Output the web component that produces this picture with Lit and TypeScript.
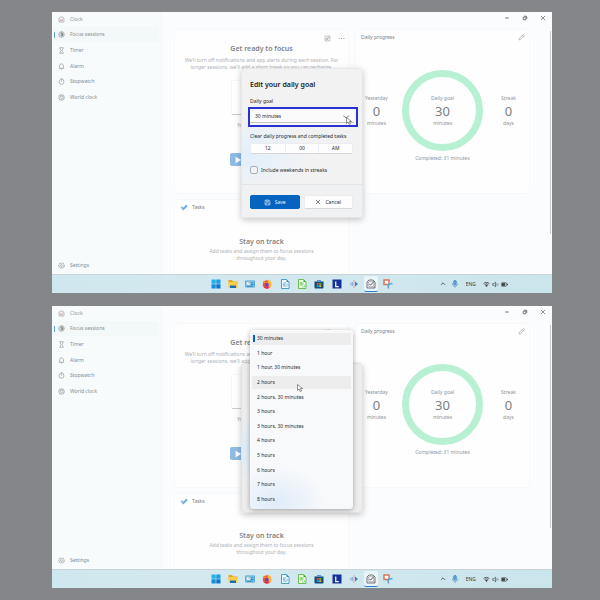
import { LitElement, html, css, svg, nothing, TemplateResult } from "lit";
import { customElement, property } from "lit/decorators.js";

const icon = (body: TemplateResult, cls = "icon") =>
  html`<svg class=${cls} viewBox="0 0 20 20" fill="none" stroke="currentColor" stroke-width="1.7" aria-hidden="true">${body}</svg>`;

const icons = {
  app: svg`<path d="M3 17V6l5-3h6l3 4v10z"/><path d="M6 11l3 3 6-7" /><path d="M10 9a3 3 0 1 0 3 3" stroke="#d79c9c"/>`,
  focus: svg`<circle cx="10" cy="10" r="8"/><circle cx="10" cy="10" r="4.5"/><path d="M10 5.5a4.5 4.5 0 0 1 4.5 4.5 4.5 4.5 0 0 1-4.500 4.500z" fill="currentColor"/><path d="M10 2v4"/>`,
  timer: svg`<path d="M4.500 2h11M4.500 18h11M6 2v3c0 3 3 4 3 5s-3 2-3 5v3M14 2v3c0 3-3 4-3 5s3 2 3 5v3"/>`,
  alarm: svg`<path d="M3 15h14l-1.500-3V8a5.500 5.500 0 0 0-11 0v4zM8 15.500a2 2 0 0 0 4 0"/>`,
  stopwatch: svg`<circle cx="10" cy="11" r="7"/><path d="M10 7v4M7.500 2h5M15.500 4.500l1.500 1.500"/>`,
  world: svg`<circle cx="10" cy="10" r="8"/><path d="M4 5c3 0 5 1 4 4l-4 2M8 17l1-4 4-2 3 4M12 2.500l-1 4 5 2"/>`,
  settings: svg`<path d="M10 2l2 2 3-.5 1 3 2.500 2-1.500 2.500.5 3-3 1-2 2.500-2.500-1.500-2.500 1.500-2-2.500-3-1 .5-3L1.500 8.500 4 6.500l1-3 3 .5z"/><circle cx="10" cy="10" r="2.500"/>`,
  popout: svg`<path d="M8 3H4a1 1 0 0 0-1 1v12a1 1 0 0 0 1 1h12a1 1 0 0 0 1-1v-4M11 3h6v6h-6zM5 15l5-5M6 10h4v4"/>`,
  more: svg`<g fill="currentColor" stroke="none"><circle cx="3" cy="10" r="1.700"/><circle cx="10" cy="10" r="1.700"/><circle cx="17" cy="10" r="1.700"/></g>`,
  edit: svg`<path d="M3 17l1-4.500L14 2.500a1.800 1.800 0 0 1 3.500 3.500L7.500 16zM12 4.500l3.500 3.500"/>`,
  minimise: svg`<path d="M4 10h12" stroke-width="2.500"/>`,
  restore: svg`<rect x="4" y="7" width="9" height="9" rx="2" stroke-width="2.500"/><path d="M7 4h6a3 3 0 0 1 3 3v6" stroke-width="2.500"/>`,
  close: svg`<path d="M3 3l14 14M17 3L3 17" stroke-width="2"/>`,
  play: svg`<path d="M4 2l14 8-14 8z" fill="#fff" stroke="none"/>`,
  save: svg`<path d="M3 5a2 2 0 0 1 2-2h9l3 3v9a2 2 0 0 1-2 2H5a2 2 0 0 1-2-2zM6.500 3v4h6V3M5.500 17v-6h9v6"/>`,
  chevron: svg`<path d="M1 5l8 6 8-6"/>`,
  chevronUp: svg`<path d="M3 13l7-7 7 7" stroke-width="2.500"/>`,
  mic: svg`<rect x="6.500" y="1" width="7" height="11" rx="3.500" fill="#5f9fd8" stroke="#4385c0"/><path d="M3.500 9a6.500 6.500 0 0 0 13 0M10 15.500V19" stroke="#4385c0"/>`,
  wifi: svg`<path d="M1.500 7.500a12 12 0 0 1 17 0M4.500 10.500a8 8 0 0 1 11 0" stroke-width="2.200"/><path d="M6.500 12.500a5 5 0 0 1 7 0L10 17z" fill="currentColor" stroke="none"/>`,
  volume: svg`<path d="M2 7.500h3.500L10 3.500v13l-4.500-4H2z"/><path d="M13 7a4 4 0 0 1 0 6"/><path d="M16 4.500a8 8 0 0 1 0 11" opacity=".35"/>`,
  battery: svg`<rect x="1" y="5" width="15" height="10" rx="2"/><path d="M3 7h8v6H3z" fill="currentColor"/><path d="M18.500 8v4" stroke-width="2.500"/>`,
  tasks: svg`<path d="M2 8l3-3 4 4-3 3z" fill="#8fc0ea" stroke="none"/><path d="M6 12l10-10 3 3L9 15.500z" fill="#5fa8e6" stroke="none"/><path d="M2 8l4 4 3 3.500-1 .5-6.500-6.500z" fill="#72aee2" stroke="none"/>`,
};

const taskbarApps: { name: string; art: TemplateResult; active?: boolean }[] = [
  { name: "Start", art: svg`<g stroke="none"><path d="M1 1h8.500v8.500H1z" fill="#27b1ec"/><path d="M10.500 1H19v8.500h-8.500z" fill="#1b9fe4"/><path d="M1 10.500h8.500V19H1z" fill="#1390dc"/><path d="M10.500 10.500H19V19h-8.500z" fill="#0b78cf"/></g>` },
  { name: "File Explorer", art: svg`<g stroke="none"><path d="M1 2h7l2 3h9v5H1z" fill="#e5a51c"/><path d="M1 6h18v12H1z" fill="#fbcf45"/><path d="M4 13h12v5H4z" fill="#1b6fb8"/></g>` },
  { name: "Control Panel", art: svg`<g stroke="none"><rect y="3" width="20" height="14" rx="1.500" fill="#4ba5d8"/><rect x="1.500" y="4.500" width="17" height="11" fill="#7cc7ec"/><circle cx="7" cy="9" r="3.500" fill="#e9f6fd"/><path d="M7 9V5.500A3.500 3.500 0 0 1 10.500 9z" fill="#f0a23c"/><path d="M12 7h5v1.500h-5zM12 10h5v1.500h-5zM4 13.500h12V15H4z" fill="#1d6ea8"/></g>` },
  { name: "Firefox", art: svg`<g stroke="none"><circle cx="10" cy="11" r="8.500" fill="#f2562a"/><path d="M12 1c4 2 7 6 6.500 11-1 4-4 7-8.500 7.500 4-3 5-7 2-11-1-2-1-5 0-7.500z" fill="#fdbb2c"/><path d="M2 6l2-3 3 3 4 1-3 3z" fill="#f98b20"/><circle cx="9.500" cy="11.500" r="4" fill="#7a3fd0"/><path d="M3 15a8 8 0 0 0 12 2l-4-1z" fill="#e22a63"/></g>` },
  { name: "Writer", art: svg`<path d="M3 1h10l5 5v13H3z" fill="#f2fafd" stroke="#2f90c0"/><path d="M13 1v5h5z" fill="#2f90c0" stroke="none"/><path d="M6 8h6M6 11h4M6 14h9M12.500 10.500h3" stroke="#5fabd0" stroke-width="1.800"/>` },
  { name: "Calc", art: svg`<path d="M3 1h10l5 5v13H3z" fill="#eefbe9" stroke="#53b83a"/><path d="M13 1v5h5z" fill="#43a52c" stroke="none"/><path d="M6 7h6v5H6zM6 9.500h6M9 7v5M10 16h5v-4" stroke="#8fd37c" />` },
  { name: "Microsoft Store", art: svg`<g stroke="none"><path d="M1 5h18v12a2 2 0 0 1-2 2H3a2 2 0 0 1-2-2z" fill="#124a78"/><path d="M6.500 5V2h7v3h-1.500V3.500H8V5z" fill="#1c7fc4"/><path d="M5.500 8h4v3.500h-4z" fill="#f05325"/><path d="M10.500 8h4v3.500h-4z" fill="#80bb2b"/><path d="M5.500 12.500h4V16h-4z" fill="#20a4ee"/><path d="M10.500 12.500h4V16h-4z" fill="#fdb913"/></g>` },
  { name: "LibreOffice", art: svg`<path d="M1 1h18v18H1z" fill="#16309c" stroke="none"/><path d="M7.500 5v10h6" stroke="#fff" stroke-width="2.500"/>` },
  { name: "Media tool", art: svg`<g stroke="none"><path d="M2 8h2v4H2zM5 6h3v8H5z" fill="#8fb4d6"/><path d="M9 2h2v16H9z" fill="#d9a3a8"/><path d="M12 5l6 5-6 5z" fill="#3f7fbe"/></g>` },
  { name: "Clock", active: true, art: svg`<path d="M2 18V6l4-4h8l4 4v12z" fill="#f4f6f7" stroke="#5b6166"/><circle cx="10" cy="10" r="6" stroke="#8b9196" stroke-width="1.300"/><path d="M6.500 10l3 2 6-7" stroke="#4a4f53" stroke-width="1.800"/><path d="M14 17l3-3v3z" fill="#d05545" stroke="none"/>` },
  { name: "Snipping Tool", art: svg`<path d="M2 2h10v9H2z" fill="#fff" stroke="#e27356" stroke-width="3"/><path d="M10 11l9-2" stroke="#48b0e8" stroke-width="3"/><path d="M10 10l1 9" stroke="#5d9fc8" stroke-width="3"/>` },
];

const durations = ["30 minutes", "1 hour", "1 hour, 30 minutes", "2 hours", "2 hours, 30 minutes", "3 hours",
  "3 hours, 30 minutes", "4 hours", "5 hours", "6 hours", "7 hours", "8 hours"];

const base = css`
  *, *::before, *::after { box-sizing: border-box; }
  :host { font-family: "Noto Sans", "Open Sans", sans-serif; font-size: 5px; line-height: 7px; }
  h1, h2, p, ul { margin: 0; padding: 0; }
  button, select, input { margin: 0; padding: 0; border: 0; background: none; color: inherit; font: inherit; }
  svg { display: block; flex: none; }
  .icon { width: 7px; height: 7px; }
  .pointer { position: absolute; width: 6px; height: 8px; }
`;

const pointer = html`<svg class="pointer" viewBox="0 0 12 16" aria-hidden="true">
  <path d="M1 1v12l3-3 2.500 5 2.500-1-2.500-5H11z" fill="#fff" stroke="#555" stroke-width="1.300" /></svg>`;

@customElement("goal-dialog")
class GoalDialog extends LitElement {
  @property({ type: Boolean, reflect: true }) open = false;

  static styles = [base, css`
    :host { display: block; position: relative; width: 122px; color: #2b2b2b; }
    .dialog {
      border-radius: 4px; overflow: hidden; border: 1px solid #e6e7e8;
      background: radial-gradient(ellipse 60px 34px at 8px 84px, #e1effb 0, #e9f1f8 50%, #f2f2f2 100%);
      box-shadow: 0 2px 6px #00000038;
    }
    :host([open]) .dialog { filter: brightness(0.98); }
    :host([open]) .body, :host([open]) .actions { visibility: hidden; }
    .body { display: flex; flex-direction: column; padding: 10px 9px 10px 8px; }
    h1 { font-size: 7px; line-height: 12px; font-weight: 600; color: #1c1c1c; }
    .label { margin-top: 7px; }
    .picker {
      position: relative; display: flex; align-items: center; height: 20px;
      margin: 2px -5px 6px -2px; border: 2px solid #2a31d2; background: #f7f7f8;
    }
    .picker select { appearance: none; flex: 1; height: 12px; margin-right: 2px; padding-left: 5px; border-bottom: 1px solid #c4c4c6; outline: 0; background: #fbfbfc; }
    .picker .icon { position: absolute; right: 6px; top: 5px; }
    .picker .pointer { right: 4px; bottom: 0; }
    .time {
      display: grid; grid-template-columns: repeat(3, 1fr); height: 11px; margin-top: 3px;
      background: #fdfdfe; border: 1px solid #ececee; border-bottom-color: #d6d6d8; border-radius: 2px;
    }
    .time button + button { border-left: 1px solid #ececee; }
    .check { display: flex; align-items: center; gap: 3px; margin-top: 12px; height: 8px; }
    .check input { appearance: none; width: 8px; height: 8px; border: 1px solid #a9b0b6; border-radius: 2px; background: #eef3f8; }
    .actions { display: grid; grid-template-columns: 1fr 1fr; gap: 4px; padding: 10px 9px 8px 8px; border-top: 1px solid #e2e4e7; background: #f0f1f2; }
    .actions button {
      display: flex; align-items: center; justify-content: center; gap: 4px; height: 14px;
      border-radius: 2px; background: #fdfdfd; border: 1px solid #ececec; border-bottom-color: #d8d8d8;
    }
    .actions .icon { width: 6px; height: 6px; }
    .actions .save { background: #0663bf; border-color: #0663bf; color: #e9f3fc; }
    .actions .save .icon { width: 7px; height: 7px; }
    .menu {
      position: absolute; left: 9px; top: -33px; width: 103px; height: 179px; padding: 2px;
      display: grid; grid-template-rows: repeat(12, 1fr); list-style: none; border-radius: 4px;
      background: radial-gradient(ellipse 50px 36px at 26px 172px, #dfecf9 0, #f8f9fb 100%);
      box-shadow: 0 1px 5px #00000055;
    }
    .menu li { display: flex; padding: 1px 0; }
    .menu button { flex: 1; display: flex; align-items: center; padding-left: 1px; text-align: left; border-radius: 1px; }
    .menu button::before { content: ""; width: 2px; height: 7px; margin-right: 2px; }
    .menu .chosen, .menu .hover { background: #ededee; }
    .menu .chosen::before { background: #0663bf; }
    .menu .pointer { left: 47px; top: 54px; }
  `];

  render() {
    return html`
      <div class="dialog" role="dialog" aria-labelledby="title">
        <div class="body">
          <h1 id="title">Edit your daily goal</h1>
          <label class="label" for="goal">Daily goal</label>
          <div class="picker">
            <select id="goal">${durations.map((d) => html`<option>${d}</option>`)}</select>
            ${icon(icons.chevron)}${pointer}
          </div>
          <span id="clear">Clear daily progress and completed tasks</span>
          <div class="time" role="group" aria-labelledby="clear">
            <button>12</button><button>00</button><button>AM</button>
          </div>
          <label class="check"><input type="checkbox" />Include weekends in streaks</label>
        </div>
        <div class="actions">
          <button class="save">${icon(icons.save)}Save</button>
          <button>${icon(icons.close)}Cancel</button>
        </div>
      </div>
      ${this.open ? html`<ul class="menu" aria-label="Daily goal">
        ${durations.map((d, i) => html`<li><button class=${i === 0 ? "chosen" : i === 3 ? "hover" : ""}>${d}</button></li>`)}
        ${pointer}
      </ul>` : nothing}`;
  }
}

@customElement("clock-desktop")
class ClockDesktop extends LitElement {
  @property({ type: Boolean, reflect: true }) open = false;

  static styles = [base, css`
    :host { display: flex; flex-direction: column; color: #919597; }
    .window { flex: 1; position: relative; display: grid; grid-template-columns: 110px 1fr; min-height: 262px; background: #fbfcfe; }
    .side { display: flex; flex-direction: column; background: #f7fbfc; border-right: 1px solid #f3f7f9; padding: 3px 2px 4px 1px; }
    .brand { display: flex; align-items: center; gap: 5px; height: 8px; padding-left: 5px; margin-bottom: 4px; }
    .side ul { display: grid; grid-template-rows: repeat(5, 1fr); height: 79px; list-style: none; }
    .side a {
      display: flex; align-items: center; gap: 5px; height: 15px; padding-left: 4px;
      border-left: 1px solid transparent; border-radius: 1px; color: #878c8e; text-decoration: none;
    }
    .side .current { background: #f3f9f9; }
    .side .current::before { content: ""; width: 1px; height: 6px; background: #5c9fe4; margin: 0 -2px 0 -4px; }
    .side .foot { margin-top: auto; height: 9px; }
    main { display: flex; flex-direction: column; min-width: 0; position: relative; }
    .controls { display: flex; justify-content: flex-end; height: 12px; color: #444; }
    .controls button { width: 18px; display: grid; place-items: center; }
    .controls .icon { width: 6px; height: 6px; }
    .cards {
      flex: 1; display: grid; grid-template-columns: 1fr 1fr; grid-template-rows: 165px 1fr;
      gap: 5px 6px; padding: 5px 22px 0 12px;
    }
    .card { background: #fefefe; border: 1px solid #f6f8fa; border-radius: 4px; min-width: 0; }
    .tasks { border-bottom: 0; border-radius: 4px 4px 0 0; }
    h2 { font-size: 7px; line-height: 11px; font-weight: 600; color: #808284; text-align: center; }
    .card p { text-align: center; color: #b0b2b4; white-space: nowrap; }
    .tools { display: flex; justify-content: flex-end; gap: 7px; padding: 3px 3px 0; height: 13px; }
    .focus { display: flex; flex-direction: column; align-items: center; }
    .focus .tools { align-self: stretch; }
    .focus p { margin-top: 3px; }
    .spin { width: 61px; height: 35px; margin-top: 9px; border: 1px solid #f5f6f7; border-bottom-color: #c9cbcd; border-radius: 2px; }
    .focus .breaks { margin-top: 7px; color: #9b9fa1; }
    .focus .play { display: flex; align-items: center; width: 64px; height: 13px; margin-top: 24px; padding-left: 4px; border-radius: 2px; background: #8dbbe3; }
    .play .icon { width: 8px; height: 8px; }
    .head { display: flex; align-items: center; justify-content: space-between; height: 15px; padding: 0 4px 0 5px; color: #7c7f81; }
    .head button, .tools { color: #919597; }
    .stats { display: grid; grid-template-columns: 1fr 81px 1fr; gap: 5px; align-items: center; margin-top: 25px; text-align: center; }
    .stat { display: flex; flex-direction: column; align-items: center; gap: 3px; }
    .stat strong { font-size: 13px; line-height: 12px; font-weight: 400; color: #7c7f81; }
    .ring { aspect-ratio: 1; display: grid; align-items: center; border: 7px solid #b7f0d3; border-radius: 50%; }
    .card .done { margin-top: 4px; color: #919597; }
    .tasks .head { justify-content: flex-start; gap: 4px; }
    .tasks h2 { margin-top: 21px; }
    .tasks p { margin-top: 1px; }
    .tasks .logo { width: 8px; height: 8px; }
    .scroll { position: absolute; right: 1px; top: 19px; width: 1px; height: 203px; background: #c9cbce; }
    .overlay { position: absolute; inset: 0; display: grid; place-items: center; }
    .taskbar { display: grid; grid-template-columns: 1fr 190px 1fr; height: 19px; border-top: 1px solid #c9d4d8; background: linear-gradient(90deg, #cfe7ee, #d4e9ef 30%, #cbe5ec); }
    .apps { grid-column: 2; display: grid; grid-template-columns: repeat(11, 1fr); place-items: center; }
    .apps button { display: grid; place-items: center; width: 14px; height: 16px; border-radius: 2px; border-bottom: 1px solid transparent; }
    .apps .art { width: 10px; height: 10px; }
    .apps .active { background: #eaf5f8; border-bottom-color: #2b82cc; }
    .tray { display: flex; align-items: center; justify-content: flex-end; padding-right: 44px; gap: 2px; color: #3a3a3a; }
    .tray span { margin: 0 5px 0 5px; }
    .tray .mic { width: 8px; height: 8px; margin-left: 3px; }
    .chevron { width: 6px; height: 6px; }
  `];

  render() {
    const nav: [string, TemplateResult][] = [["Focus sessions", icons.focus], ["Timer", icons.timer], ["Alarm", icons.alarm],
      ["Stopwatch", icons.stopwatch], ["World clock", icons.world]];
    const stat = (label: string, value: string, unit: string) =>
      html`<div class="stat"><span>${label}</span><strong>${value}</strong><span>${unit}</span></div>`;
    return html`
      <div class="window">
        <nav class="side">
          <div class="brand">${icon(icons.app)}Clock</div>
          <ul>${nav.map(([label, art], i) => html`<li><a href="#" class=${i ? "" : "current"}>${icon(art)}${label}</a></li>`)}</ul>
          <a class="foot" href="#">${icon(icons.settings)}Settings</a>
        </nav>
        <main>
          <div class="controls">
            <button aria-label="Minimize">${icon(icons.minimise)}</button>
            <button aria-label="Restore">${icon(icons.restore)}</button>
            <button aria-label="Close">${icon(icons.close)}</button>
          </div>
          <div class="cards">
            <section class="card focus">
              <div class="tools">
                <button aria-label="Keep on top">${icon(icons.popout)}</button>
                <button aria-label="More options">${icon(icons.more)}</button>
              </div>
              <h2>Get ready to focus</h2>
              <p>We’ll turn off notifications and app alerts during each session. For<br />longer sessions, we’ll add a short break so you can recharge.</p>
              <div class="spin"></div>
              <p class="breaks">You’ll have no breaks</p>
              <button class="play" aria-label="Start focus session">${icon(icons.play)}</button>
            </section>
            <section class="card">
              <div class="head">Daily progress<button aria-label="Edit goal">${icon(icons.edit)}</button></div>
              <div class="stats">
                ${stat("Yesterday", "0", "minutes")}
                <div class="ring">${stat("Daily goal", "30", "minutes")}</div>
                ${stat("Streak", "0", "days")}
              </div>
              <p class="done">Completed: 31 minutes</p>
            </section>
            <section class="card tasks">
              <div class="head">${icon(icons.tasks, "logo")}Tasks</div>
              <h2>Stay on track</h2>
              <p>Add tasks and assign them to focus sessions<br />throughout your day.</p>
            </section>
          </div>
          <div class="scroll"></div>
        </main>
        <div class="overlay"><goal-dialog ?open=${this.open}></goal-dialog></div>
      </div>
      <div class="taskbar">
        <div class="apps">${taskbarApps.map((a) => html`<button class=${a.active ? "active" : ""} aria-label=${a.name}>${icon(a.art, "art")}</button>`)}</div>
        <div class="tray">${icon(icons.chevronUp, "chevron")}${icon(icons.mic, "mic")}<span>ENG</span>${icon(icons.wifi)}${icon(icons.volume)}${icon(icons.battery)}</div>
      </div>`;
  }
}

@customElement("app-root")
class AppRoot extends LitElement {
  static styles = css`
    :host { display: flex; flex-direction: column; gap: 13px; box-sizing: border-box; min-height: 100vh; padding: 12px 48px 12px 52px; background: #85868a; }
    .last { flex: 1; }
  `;

  render() {
    return html`<clock-desktop></clock-desktop><clock-desktop class="last" open></clock-desktop>`;
  }
}
